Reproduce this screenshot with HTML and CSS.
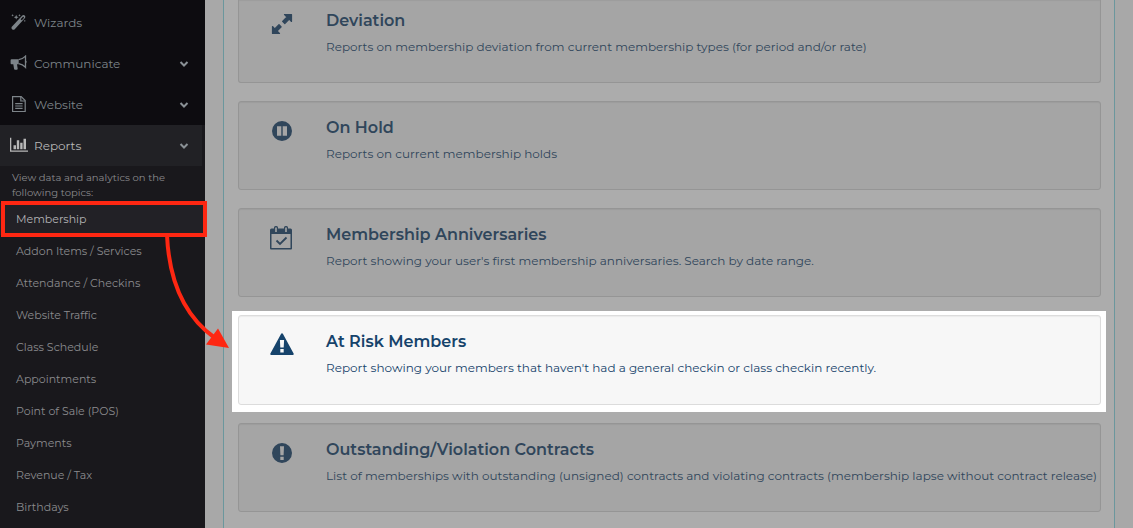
FILE: index.html
```html
<!DOCTYPE html>
<html lang="en">
<head>
    <meta charset="UTF-8">
    <meta name="viewport" content="width=device-width, initial-scale=1.0">
    <title>Membership Reports</title>
    <link rel="stylesheet" href="styles.css">
</head>
<body>

<nav class="sidebar">
    <ul class="menu">
        <li>
            <a class="menu-item" href="#wizards">
                <svg class="menu-icon" viewBox="0 0 18 18"><path d="M1.600 13 12.300 1.400a1.900 1.900 0 0 1 2.700 2.600L4.500 15.500a2 2 0 0 1-2.900-2.500zM10.600 5.200l1.200 1.100 2.300-2.500-.9-1.300z" fill-rule="evenodd"/><path d="m6.200.8.7 1.700 1.700.7-1.700.7-.7 1.700-.7-1.700-1.700-.7 1.700-.7zM2.600 0l.4.9.9.4-.9.4-.4.9-.4-.9-.9-.4.9-.4zM9.500 0l.4.9.9.4-.9.4-.4.9-.4-.9-.9-.4.9-.4zM14.800 5.800l.3.8.8.3-.8.3-.3.8-.3-.8-.8-.3.8-.3z"/></svg>
                <span>Wizards</span>
            </a>
        </li>
        <li>
            <button class="menu-item" type="button">
                <svg class="menu-icon" viewBox="0 0 18 18"><path d="M1.500 4.200h7.200v5H7l.7 4.600c0 .6-.3.900-.9.900H5c-.5 0-.8-.2-.9-.7L3.300 9.200H1.500A1 1 0 0 1 .6 8.200V5.200a1 1 0 0 1 .9-1z"/><path d="M8.700 4.700c2.700-.4 5-1.700 6.800-3.600v11.200c-1.800-1.900-4.100-3.200-6.800-3.600" fill="none" stroke="currentColor" stroke-width="1.300"/><path d="M15.500 5.400c1.500.2 1.500 2.400 0 2.600z"/></svg>
                <span>Communicate</span>
                <svg class="chevron" viewBox="0 0 10 8"><path d="m1.500 2 3.500 3.500L8.500 2"/></svg>
            </button>
        </li>
        <li>
            <button class="menu-item" type="button">
                <svg class="menu-icon" viewBox="0 0 18 18"><g fill="none" stroke="currentColor" stroke-width="1.200"><path d="M2.600.6h8.600l4 4v10.900H2.600z"/><path d="M10.800.8V5h4.200M5.200 7.700h7.400M5.200 10h7.400M5.200 12.300h7.400"/></g></svg>
                <span>Website</span>
                <svg class="chevron" viewBox="0 0 10 8"><path d="m1.500 2 3.500 3.500L8.500 2"/></svg>
            </button>
        </li>
        <li>
            <button class="menu-item open" type="button" aria-expanded="true">
                <svg class="menu-icon" viewBox="0 0 18 18"><path d="M0 .7h1.300v12.700H18v1.300H0zM3.500 8.200H6v4H3.500zM6.800 3.200h2.400v9H6.800zM10.200 5.700h2.400v6.500h-2.400zM13.500 1.700H16v10.500h-2.500z"/></svg>
                <span>Reports</span>
                <svg class="chevron" viewBox="0 0 10 8"><path d="m1.500 2 3.500 3.500L8.500 2"/></svg>
            </button>
        </li>
    </ul>
    <div class="submenu">
        <p class="hint">View data and analytics on the following topics:</p>
        <ul>
            <li class="current"><a href="#membership">Membership</a></li>
            <li><a href="#addons">Addon Items / Services</a></li>
            <li><a href="#attendance">Attendance / Checkins</a></li>
            <li><a href="#traffic">Website Traffic</a></li>
            <li><a href="#classes">Class Schedule</a></li>
            <li><a href="#appointments">Appointments</a></li>
            <li><a href="#pos">Point of Sale (POS)</a></li>
            <li><a href="#payments">Payments</a></li>
            <li><a href="#revenue">Revenue / Tax</a></li>
            <li><a href="#birthdays">Birthdays</a></li>
        </ul>
    </div>
</nav>

<main class="content">
    <section class="panel">
        <a class="card card-first" href="#deviation">
            <svg class="card-icon" viewBox="0 0 24 24"><path stroke="currentColor" stroke-width="1.200" stroke-linejoin="round" d="M14.500 2.500h7v7l-2.300-2.300-4.400 4.400-2.200-2.200 4.400-4.400zM9.500 21.500h-7v-7l2.300 2.300 4.200-4.200 2.200 2.200-4.200 4.200z"/></svg>
            <div class="card-text">
                <h2>Deviation</h2>
                <p>Reports on membership deviation from current membership types (for period and/or rate)</p>
            </div>
        </a>
        <a class="card" href="#on-hold">
            <svg class="card-icon" viewBox="0 0 24 24"><path fill-rule="evenodd" d="M12 2a10 10 0 1 1 0 20 10 10 0 0 1 0-20zM7 7.300v9.400h4.300V7.300zM12.700 7.300v9.400H17V7.300z"/></svg>
            <div class="card-text">
                <h2>On Hold</h2>
                <p>Reports on current membership holds</p>
            </div>
        </a>
        <a class="card" href="#anniversaries">
            <svg class="card-icon" viewBox="0 0 24 24"><path fill-rule="evenodd" d="M1.500 2.500H4V1.500a1.500 1.500 0 0 1 1.500-1.500h1A1.500 1.500 0 0 1 8 1.500v1h6v-1A1.500 1.500 0 0 1 15.500 0h1A1.500 1.500 0 0 1 18 1.500v1h2.500A1.500 1.500 0 0 1 22 4v18.500a1 1 0 0 1-1 1H1a1 1 0 0 1-1-1V4a1.500 1.500 0 0 1 1.500-1.500zM1.500 8v14h19V8zM5.200 1.500V6h1.600V1.500zM15.200 1.500V6h1.600V1.500z"/><path d="m6.500 14.500 3.500 3.500 6.500-6.500" fill="none" stroke="currentColor" stroke-width="1.800"/></svg>
            <div class="card-text">
                <h2>Membership Anniversaries</h2>
                <p>Report showing your user's first membership anniversaries. Search by date range.</p>
            </div>
        </a>
        <div class="spotlight">
            <a class="card" href="#at-risk">
                <svg class="card-icon" viewBox="0 0 24 24"><path fill-rule="evenodd" d="M11 .9a1.100 1.100 0 0 1 2 0l10.600 19.600a1.100 1.100 0 0 1-1 1.600H1.400a1.100 1.100 0 0 1-1-1.600zM9.900 7l.4 7.500h3.400l.4-7.500zM10.300 16V19.500h3.400v-3.500z"/></svg>
                <div class="card-text">
                    <h2>At Risk Members</h2>
                    <p>Report showing your members that haven't had a general checkin or class checkin recently.</p>
                </div>
            </a>
        </div>
        <a class="card" href="#contracts">
            <svg class="card-icon" viewBox="0 0 24 24"><path fill-rule="evenodd" d="M12 2a10 10 0 1 1 0 20 10 10 0 0 1 0-20zM10 5.300l.4 9h3.200l.4-9zM10.300 15.700v3.200h3.400v-3.200z"/></svg>
            <div class="card-text">
                <h2>Outstanding/Violation Contracts</h2>
                <p>List of memberships with outstanding (unsigned) contracts and violating contracts (membership lapse without contract release)</p>
            </div>
        </a>
    </section>
</main>

<!-- pointer from the Membership link to the report -->
<svg class="pointer" viewBox="0 0 70 120" aria-hidden="true">
    <path class="pointer-line" d="M7 5C9 50 24 86 55 108"/>
    <path class="pointer-head" d="M69 118 46 114.500 58 98.500z"/>
</svg>

</body>
</html>
```
FILE: styles.css
```css
* {
    box-sizing: border-box;
}
body {
    margin: 0;
    height: 100vh;
    display: flex;
    overflow: hidden;
    position: relative;
    background: #a8a8a8;
    font-family: Montserrat, Inter, sans-serif;
}
ul {
    list-style: none;
    margin: 0;
    padding: 0;
}
a {
    color: inherit;
    text-decoration: none;
}

/* Sidebar */
.sidebar {
    flex: 0 0 205px;
    position: relative;
    z-index: 1;
    background: #19181c;
    color: #8b8b8e;
}
.menu {
    padding-top: 2px;
    background: #0d0c10;
}
.menu-item {
    display: flex;
    align-items: center;
    gap: 6px;
    width: 100%;
    height: 41px;
    padding: 0 16px 0 10px;
    border: 0;
    background: none;
    color: #7d8489;
    font: inherit;
    font-size: 12px;
    text-align: left;
}
.menu-item.open {
    background: #212125;
    border-right: 3px solid #19181c;
    padding-right: 13px;
    color: #b8b8b8;
}
.menu-icon {
    width: 18px;
    height: 18px;
    fill: currentColor;
}
.chevron {
    width: 10px;
    height: 8px;
    margin-left: auto;
    fill: none;
    stroke: #8a9196;
    stroke-width: 2;
}
.hint {
    margin: 0;
    padding: 4px 30px 3px 12px;
    font-size: 10px;
    line-height: 15px;
}
.submenu li {
    position: relative;
}
.submenu a {
    display: block;
    padding-left: 16px;
    font-size: 11px;
    line-height: 32px;
}
.submenu .current {
    background: #222126;
    color: #b4b4b6;
}
.current::after {
    content: "";
    position: absolute;
    inset: -2px -2px -2px 1px;
    border: 4px solid #fe2712;
}

/* Report list */
.content {
    flex: 1;
    padding: 0 18px;
}
.panel {
    display: flex;
    flex-direction: column;
    gap: 18px;
    min-height: 100vh;
    padding: 0 13px 0 14px;
    border: 1px solid #6b979d;
    border-width: 0 1px;
    background: #acacac;
}
.card {
    display: flex;
    gap: 32px;
    padding: 13px 0 25px 31px;
    border: 1px solid #959595;
    border-radius: 3px;
    background: #a5a5a5;
    box-shadow: inset 0 1px 1px rgba(0, 0, 0, 0.05);
    color: #30465b;
}
.card-first {
    padding-top: 8px;
    border-top: 0;
    border-radius: 0 0 3px 3px;
}
.card-icon {
    flex: none;
    width: 24px;
    height: 24px;
    margin-top: 4px;
    fill: currentColor;
}
.card h2 {
    margin: 0 0 3px;
    font-size: 16px;
    font-weight: 600;
    line-height: 26px;
}
.card p {
    margin: 0;
    font-size: 12px;
    line-height: 20px;
}
.spotlight {
    margin: -4px -5px -7px -6px;
    padding: 4px 5px 7px 6px;
    background: #fff;
}
.spotlight .card {
    padding-bottom: 26px;
    border-color: #dcdcdc;
    background: #f7f7f7;
    color: #16436b;
}

.pointer {
    position: absolute;
    z-index: 2;
    left: 160px;
    top: 230px;
    width: 70px;
    height: 120px;
}
.pointer-line {
    fill: none;
    stroke: #fe2712;
    stroke-width: 4;
}
.pointer-head {
    fill: #fe2712;
}
```
